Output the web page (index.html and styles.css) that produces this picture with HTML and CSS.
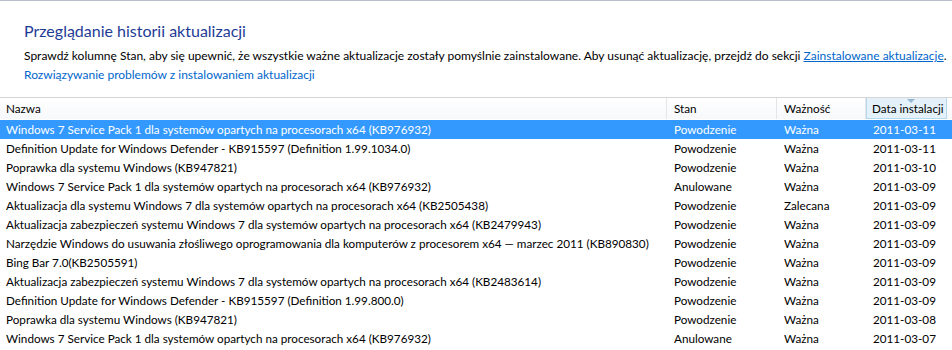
FILE: index.html
```html
<!DOCTYPE html>
<html>
  <head>
    <meta charset="utf-8" />
    <title>Historia aktualizacji</title>
    <link rel="stylesheet" href="styles.css">
  </head>
  <body>
    <div class="intro">
      <h1 class="title">Przeglądanie historii aktualizacji</h1>
      <p class="desc">Sprawdź kolumnę Stan, aby się upewnić, że wszystkie ważne aktualizacje zostały pomyślnie zainstalowane. Aby usunąć aktualizację, przejdź do sekcji <a class="ulink" href="#">Zainstalowane aktualizacje</a>.</p>
      <a class="link" href="#">Rozwiązywanie problemów z instalowaniem aktualizacji</a>
    </div>
    <div class="list">
      <div class="row head">
        <div class="cell">Nazwa</div>
        <div class="cell">Stan</div>
        <div class="cell">Ważność</div>
        <div class="cell sorted">Data instalacji<span class="arrow"></span></div>
        <div class="cell filler"></div>
      </div>
      <div class="row selected">
        <div class="cell">Windows 7 Service Pack 1 dla systemów opartych na procesorach x64 (KB976932)</div>
        <div class="cell">Powodzenie</div><div class="cell">Ważna</div><div class="cell">2011-03-11</div>
      </div>
      <div class="row">
        <div class="cell">Definition Update for Windows Defender - KB915597 (Definition 1.99.1034.0)</div>
        <div class="cell">Powodzenie</div><div class="cell">Ważna</div><div class="cell">2011-03-11</div>
      </div>
      <div class="row">
        <div class="cell">Poprawka dla systemu Windows (KB947821)</div>
        <div class="cell">Powodzenie</div><div class="cell">Ważna</div><div class="cell">2011-03-10</div>
      </div>
      <div class="row">
        <div class="cell">Windows 7 Service Pack 1 dla systemów opartych na procesorach x64 (KB976932)</div>
        <div class="cell">Anulowane</div><div class="cell">Ważna</div><div class="cell">2011-03-09</div>
      </div>
      <div class="row">
        <div class="cell">Aktualizacja dla systemu Windows 7 dla systemów opartych na procesorach x64 (KB2505438)</div>
        <div class="cell">Powodzenie</div><div class="cell">Zalecana</div><div class="cell">2011-03-09</div>
      </div>
      <div class="row">
        <div class="cell">Aktualizacja zabezpieczeń systemu Windows 7 dla systemów opartych na procesorach x64 (KB2479943)</div>
        <div class="cell">Powodzenie</div><div class="cell">Ważna</div><div class="cell">2011-03-09</div>
      </div>
      <div class="row">
        <div class="cell">Narzędzie Windows do usuwania złośliwego oprogramowania dla komputerów z procesorem x64 — marzec 2011 (KB890830)</div>
        <div class="cell">Powodzenie</div><div class="cell">Ważna</div><div class="cell">2011-03-09</div>
      </div>
      <div class="row">
        <div class="cell">Bing Bar 7.0(KB2505591)</div>
        <div class="cell">Powodzenie</div><div class="cell">Ważna</div><div class="cell">2011-03-09</div>
      </div>
      <div class="row">
        <div class="cell">Aktualizacja zabezpieczeń systemu Windows 7 dla systemów opartych na procesorach x64 (KB2483614)</div>
        <div class="cell">Powodzenie</div><div class="cell">Ważna</div><div class="cell">2011-03-09</div>
      </div>
      <div class="row">
        <div class="cell">Definition Update for Windows Defender - KB915597 (Definition 1.99.800.0)</div>
        <div class="cell">Powodzenie</div><div class="cell">Ważna</div><div class="cell">2011-03-09</div>
      </div>
      <div class="row">
        <div class="cell">Poprawka dla systemu Windows (KB947821)</div>
        <div class="cell">Powodzenie</div><div class="cell">Ważna</div><div class="cell">2011-03-08</div>
      </div>
      <div class="row">
        <div class="cell">Windows 7 Service Pack 1 dla systemów opartych na procesorach x64 (KB976932)</div>
        <div class="cell">Anulowane</div><div class="cell">Ważna</div><div class="cell">2011-03-07</div>
      </div>
    </div>
  </body>
</html>
```

FILE: styles.css
```css
body {
  margin: 0;
  background: #fff;
  font-family: Lato, sans-serif;
  font-size: 12px;
  color: #000;
  border-top: 1px solid #b9bdcc;
  overflow: hidden;
}
.intro {
  padding: 19px 0 0 24px;
  height: 96px;
  box-sizing: border-box;
}
.title {
  margin: 0;
  font-size: 16px;
  font-weight: normal;
  color: #1e3c96;
  line-height: 22px;
}
.desc {
  margin: 5px 0 0;
  line-height: 18px;
  white-space: nowrap;
}
.ulink {
  color: #0066cc;
}
.link {
  display: block;
  margin-top: 1px;
  line-height: 18px;
  color: #0066cc;
  text-decoration: none;
}
.list {
  border-top: 1px solid #d5d5d5;
  font-size: 11.7px;
}
.row {
  display: grid;
  grid-template-columns: 667px 110px 89px 1fr;
  height: 19px;
  line-height: 19px;
  white-space: nowrap;
}
.row .cell {
  padding-left: 7px;
  overflow: hidden;
}
.row .cell:first-child {
  padding-left: 6px;
}
.head {
  grid-template-columns: 667px 110px 89px 81px 1fr;
  height: 21px;
  line-height: 21px;
  margin-bottom: 1px;
}
.head .cell {
  border-right: 1px solid #e3e5e8;
  background: linear-gradient(#fff, #f7f8fa);
}
.head .sorted {
  position: relative;
  background: #e4f1fa;
  border: 1px solid #b2d9f0;
  border-top: none;
  padding-left: 5px;
}
.head .filler {
  border-right: none;
}
.arrow {
  position: absolute;
  top: 1px;
  left: 40px;
  border-left: 4px solid transparent;
  border-right: 4px solid transparent;
  border-top: 4px solid #94b8d0;
}
.selected {
  background: #3399ff;
  color: #fff;
}
```
